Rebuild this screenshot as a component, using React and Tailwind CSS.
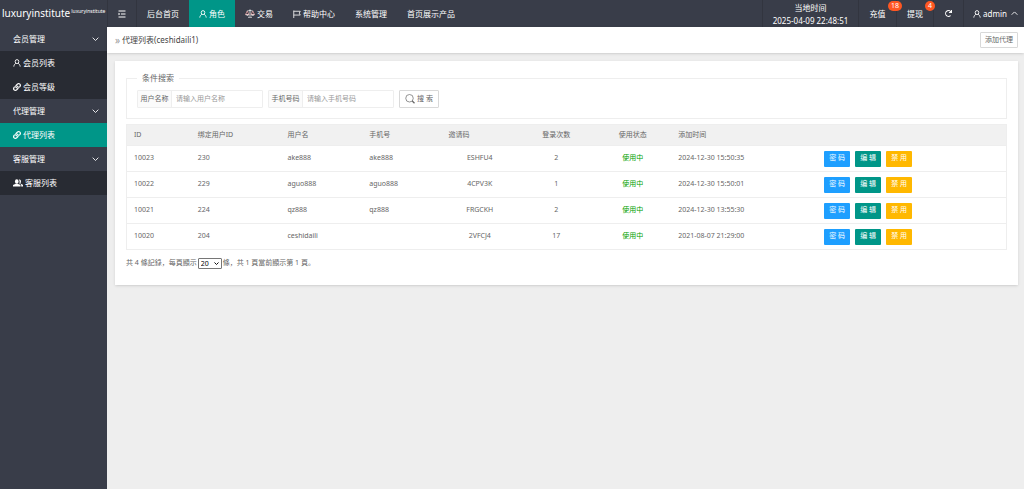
import React, { useState } from 'react';
import { FaLink, FaRedo } from 'react-icons/fa';

const UserIcon = () => (
  <svg viewBox="0 0 16 16" className="size-2 shrink-0" fill="none" stroke="currentColor" strokeWidth="1.8">
    <ellipse cx="8" cy="5.2" rx="3.6" ry="4" />
    <path d="M5.8 8.6C3.4 9.8 2 12 1.6 15.2M10.2 8.6c2.4 1.2 3.8 3.4 4.2 6.6" />
  </svg>
);

const UsersIcon = () => (
  <svg viewBox="0 0 20 16" className="h-2 w-2.5 shrink-0" fill="currentColor">
    <ellipse cx="7.5" cy="5" rx="3.6" ry="4.4" />
    <path d="M0 15v-2.4c0-1.4 3-2 5.6-3.2h3.8c2.6 1.2 5.6 1.8 5.6 3.2V15z" />
    <path d="M11.5 1.2c2.6-1 4.7.9 4.5 4-.1 1.8-.8 3-1.6 3.8 2.6 1.2 5.6 1.8 5.6 3.4V15h-3.6v-2.8c0-1.3-1.7-2.1-3.9-3 1.1-2.4 1.1-5.8-1-8z" />
  </svg>
);

const ScaleIcon = () => (
  <svg viewBox="0 0 20 18" className="h-[9px] w-2.5 shrink-0" fill="none" stroke="currentColor" strokeWidth="1.5">
    <path d="M10 1v14M3.5 4.5C6 4.5 8 2.5 10 2.5s4 2 6.500 2M6 16.5h8" />
    <path d="M4.5 4.5L1 11h7zM15.5 4.5L12 11h7z" stroke="#f0a5a5" />
    <path d="M1 11c.5 3.2 6.5 3.2 7 0zM12 11c.5 3.2 6.5 3.2 7 0z" fill="currentColor" stroke="none" />
  </svg>
);

const FlagIcon = () => (
  <svg viewBox="0 0 16 16" className="size-2 shrink-0" fill="none" stroke="currentColor" strokeWidth="1.6">
    <path d="M1.5 1v15M1.5 2.5h13l-2 3.8 2 3.8h-13" />
  </svg>
);

const MenuIcon = () => (
  <svg viewBox="0 0 16 16" className="size-2" fill="none" stroke="currentColor" strokeWidth="2">
    <path d="M1 2h14M6 8h9M1 14h14" />
    <path d="M1 5.5v5L4.5 8z" fill="currentColor" stroke="none" />
  </svg>
);

const SearchIcon = () => (
  <svg viewBox="0 0 20 20" className="size-2.5" fill="none" stroke="currentColor" strokeWidth="1.4">
    <circle cx="9" cy="8.5" r="7.5" />
    <path d="M14.5 14l4.5 4.5" strokeWidth="2.4" />
  </svg>
);

const Arrow = ({ className }) => (
  <svg viewBox="0 0 16 10" className={className} fill="none" stroke="currentColor" strokeWidth="2">
    <path d="M1.5 1.5L8 8l6.5-6.5" />
  </svg>
);

const navItems = [
  { label: '后台首页' },
  { label: '角色', icon: <UserIcon />, active: true },
  { label: '交易', icon: <ScaleIcon /> },
  { label: '帮助中心', icon: <FlagIcon /> },
  { label: '系统管理' },
  { label: '首页展示产品' },
];

const menu = [
  {
    title: '会员管理',
    items: [
      { label: '会员列表', icon: <UserIcon /> },
      { label: '会员等级', icon: <FaLink className="size-2" /> },
    ],
  },
  {
    title: '代理管理',
    items: [
      { label: '代理列表', icon: <FaLink className="size-2" />, active: true },
    ],
  },
  {
    title: '客服管理',
    items: [{ label: '客服列表', icon: <UsersIcon /> }],
  },
];

const agents = [
  { id: 10023, bindId: 230, name: 'ake888', phone: 'ake888', code: 'ESHFU4', logins: 2, time: '2024-12-30 15:50:35' },
  { id: 10022, bindId: 229, name: 'aguo888', phone: 'aguo888', code: '4CPV3K', logins: 1, time: '2024-12-30 15:50:01' },
  { id: 10021, bindId: 224, name: 'qz888', phone: 'qz888', code: 'FRGCKH', logins: 2, time: '2024-12-30 13:55:30' },
  { id: 10020, bindId: 204, name: 'ceshidaili', phone: '', code: '2VFCJ4', logins: 17, time: '2021-08-07 21:29:00' },
];

const Header = () => (
  <header className="flex h-[27px] bg-[#393d49] text-[8px] text-white">
    <a href="#" className="flex w-[107px] shrink-0 items-center gap-px whitespace-nowrap pl-0.5">
      <span className="text-[10px]">luxuryinstitute</span>
      <sup className="text-[5px]">luxuryinstitute</sup>
    </a>
    <button aria-label="菜单" className="flex w-[30px] items-center justify-center border-x border-[#32353f]">
      <MenuIcon />
    </button>
    <nav className="flex">
      {navItems.map((item) => (
        <a
          key={item.label}
          href="#"
          className={`flex items-center gap-0.5 whitespace-nowrap px-[10px] ${item.active ? 'bg-[#009688]' : ''}`}
        >
          {item.icon}
          {item.label}
        </a>
      ))}
    </nav>
    <div className="ml-auto flex">
      <div className="flex w-24 flex-col items-center justify-center border-l border-[#32353f] leading-[13px]">
        <span>当地时间</span>
        <time>2025-04-09 22:48:51</time>
      </div>
      <a href="#" className="relative flex w-[38px] items-center justify-center border-l border-[#32353f]">
        充值
        <span className="absolute top-px -right-1.5 z-10 rounded-full bg-[#ff5722] px-[3px] text-[7px] leading-[10px]">18</span>
      </a>
      <a href="#" className="relative flex w-[37px] items-center justify-center border-l border-[#32353f]">
        提现
        <span className="absolute top-px -right-0.5 z-10 rounded-full bg-[#ff5722] px-[3px] text-[7px] leading-[10px]">4</span>
      </a>
      <button aria-label="刷新" className="flex w-[30px] items-center justify-center border-l border-[#32353f]">
        <FaRedo className="size-[7px]" />
      </button>
      <a href="#" className="flex w-[61px] items-center justify-end gap-0.5 border-l border-[#32353f] pr-1.5">
        <UserIcon />
        admin
        <Arrow className="ml-0.5 w-[7px] rotate-180" />
      </a>
    </div>
  </header>
);

const Sidebar = () => (
  <aside className="w-[107px] shrink-0 bg-[#393d49] text-[8px] text-white">
    {menu.map((group) => (
      <div key={group.title}>
        <button className="flex h-6 w-full items-center justify-between pr-2 pl-[13px]">
          {group.title}
          <Arrow className="w-[7px]" />
        </button>
        {group.items.map((item) => (
          <a
            key={item.label}
            href="#"
            className={`flex h-6 items-center gap-0.5 pl-[13px] ${item.active ? 'bg-[#009688]' : 'bg-[#282b33]'}`}
          >
            {item.icon}
            {item.label}
          </a>
        ))}
      </div>
    ))}
  </aside>
);

const SearchField = ({ id, label, placeholder, value, onChange }) => (
  <div className="flex h-[18px] w-[126px] rounded-[1px] border border-[#eee]">
    <label htmlFor={id} className="flex w-[34px] shrink-0 items-center justify-center border-r border-[#eee] bg-[#fbfbfb]">
      {label}
    </label>
    <input
      id={id}
      value={value}
      onChange={onChange}
      placeholder={placeholder}
      className="min-w-0 flex-1 px-1 outline-none placeholder:text-[#999]"
    />
  </div>
);

const SearchForm = () => {
  const [name, setName] = useState('');
  const [phone, setPhone] = useState('');

  return (
    <fieldset className="border border-[#eee] px-[10px] pt-1.5 pb-[10px]">
      <legend className="px-[5px] text-[8px] leading-3">条件搜索</legend>
      <form className="flex gap-[5px]" onSubmit={(e) => e.preventDefault()}>
        <SearchField
          id="name"
          label="用户名称"
          placeholder="请输入用户名称"
          value={name}
          onChange={(e) => setName(e.target.value)}
        />
        <SearchField
          id="phone"
          label="手机号码"
          placeholder="请输入手机号码"
          value={phone}
          onChange={(e) => setPhone(e.target.value)}
        />
        <button className="flex h-[18px] w-10 items-center justify-center gap-0.5 rounded-[1px] border border-[#d9d9d9]">
          <SearchIcon />
          搜 索
        </button>
      </form>
    </fieldset>
  );
};

const AgentTable = () => (
  <table className="mt-[5px] w-full table-fixed border border-[#eee] text-left">
    <colgroup>
      <col className="w-[7.3%]" />
      <col className="w-[10.2%]" />
      <col className="w-[9.3%]" />
      <col className="w-[9%]" />
      <col className="w-[8.7%]" />
      <col className="w-[8.7%]" />
      <col className="w-[8.7%]" />
      <col className="w-[16.6%]" />
      <col />
    </colgroup>
    <thead>
      <tr className="h-[21px] bg-[#f1f1f1] *:px-[7px] *:font-normal">
        <th>ID</th>
        <th>绑定用户ID</th>
        <th>用户名</th>
        <th>手机号</th>
        <th>邀请码</th>
        <th className="text-center">登录次数</th>
        <th className="text-center">使用状态</th>
        <th>添加时间</th>
        <th aria-label="操作"></th>
      </tr>
    </thead>
    <tbody>
      {agents.map((agent) => (
        <tr key={agent.id} className="h-[26px] border-t border-[#eee] *:px-[7px]">
          <td>{agent.id}</td>
          <td>{agent.bindId}</td>
          <td>{agent.name}</td>
          <td>{agent.phone}</td>
          <td className="text-center">{agent.code}</td>
          <td className="text-center">{agent.logins}</td>
          <td className="text-center text-[#00a000]">使用中</td>
          <td>{agent.time}</td>
          <td>
            <div className="flex gap-[5px] text-white">
              <button className="h-4 w-[26px] rounded-[1px] bg-[#1e9fff]">密 码</button>
              <button className="h-4 w-[26px] rounded-[1px] bg-[#009688]">编 辑</button>
              <button className="h-4 w-[26px] rounded-[1px] bg-[#ffb800]">禁 用</button>
            </div>
          </td>
        </tr>
      ))}
    </tbody>
  </table>
);

const Pagination = () => (
  <div lang="zh-CN" className="mt-2 flex items-center gap-px">
    <label htmlFor="size">共 4 條記錄，每頁顯示</label>
    <div className="relative flex text-black">
      <select
        id="size"
        defaultValue="20"
        className="h-[11px] w-6 appearance-none rounded-[1px] border border-[#767676] bg-white pl-0.5 text-[7px] leading-[9px]"
      >
        <option>20</option>
        <option>50</option>
        <option>100</option>
      </select>
      <Arrow className="pointer-events-none absolute top-1 right-[3px] w-[5px] stroke-3" />
    </div>
    <span>條，共 1 頁當前顯示第 1 頁。</span>
  </div>
);

const App = () => {
  return (
    <div className="flex min-h-screen flex-col bg-[#eee] font-['Noto_Sans','Noto_Sans_CJK_SC',sans-serif] text-[7px] text-[#666]">
      <Header />
      <div className="flex flex-1">
        <Sidebar />
        <main className="min-w-0 flex-1">
          <div className="flex h-[26px] items-center justify-between bg-white pr-1.5 pl-2 shadow-sm">
            <h1 className="flex items-center gap-0.5 text-[8px] text-[#444]">
              <span className="text-[10px] leading-3 text-[#999]">»</span>
              代理列表(ceshidaili1)
            </h1>
            <button className="h-4 rounded-[1px] border border-[#d9d9d9] px-1">添加代理</button>
          </div>
          <section className="mx-2 mt-2 mr-1.5 bg-white px-[11px] pt-[11px] pb-4 shadow-sm">
            <SearchForm />
            <AgentTable />
            <Pagination />
          </section>
        </main>
      </div>
    </div>
  );
};

export default App;
